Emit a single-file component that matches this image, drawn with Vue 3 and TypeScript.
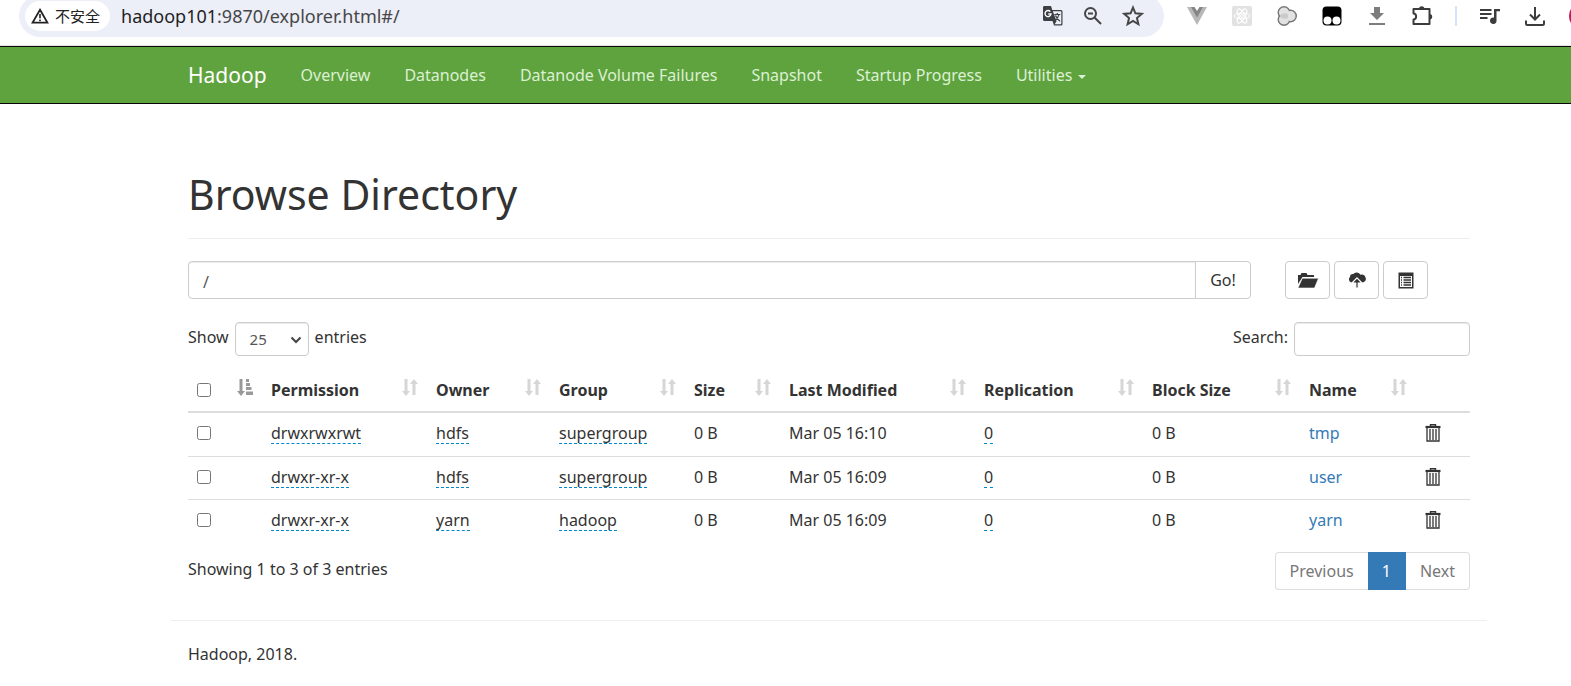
<script setup lang="ts">
import { ref } from 'vue'

interface Entry {
  permission: string
  owner: string
  group: string
  size: string
  modified: string
  replication: number
  blockSize: string
  name: string
}

const navLinks: string[] = ['Overview', 'Datanodes', 'Datanode Volume Failures', 'Snapshot', 'Startup Progress']
const columns: string[] = ['Permission', 'Owner', 'Group', 'Size', 'Last Modified', 'Replication', 'Block Size', 'Name']

const entries: Entry[] = [
  { permission: 'drwxrwxrwt', owner: 'hdfs', group: 'supergroup', size: '0 B', modified: 'Mar 05 16:10', replication: 0, blockSize: '0 B', name: 'tmp' },
  { permission: 'drwxr-xr-x', owner: 'hdfs', group: 'supergroup', size: '0 B', modified: 'Mar 05 16:09', replication: 0, blockSize: '0 B', name: 'user' },
  { permission: 'drwxr-xr-x', owner: 'yarn', group: 'hadoop', size: '0 B', modified: 'Mar 05 16:09', replication: 0, blockSize: '0 B', name: 'yarn' },
]

const address = ref('hadoop101:9870/explorer.html#/')
const directory = ref('/')
const pageSize = ref('25')
const search = ref('')
const selected = ref<string[]>([])

function toggleAll(event: Event): void {
  selected.value = (event.target as HTMLInputElement).checked ? entries.map((e) => e.name) : []
}
</script>

<template>
  <header class="browser">
    <div class="omnibox">
      <button class="chip" type="button">
        <svg width="18" height="16" viewBox="0 0 18 16" aria-hidden="true">
          <path d="M9 1.8 16.4 14.6H1.6Z" fill="none" stroke="#222" stroke-width="1.8" />
          <path d="M9 6v4.2M9 11.4v1.8" stroke="#222" stroke-width="1.6" />
        </svg>
        <span>不安全</span>
      </button>
      <div class="address" role="textbox" aria-label="Address"><b>{{ address.split(':')[0] }}</b>:{{ address.split(':')[1] }}</div>
      <button class="tool" type="button" aria-label="Translate">
        <svg width="22" height="22" viewBox="0 0 22 22">
          <path d="M2 1h7l1.300 4H19a1.500 1.500 0 0 1 1.500 1.500V19a1.500 1.500 0 0 1-1.500 1.500h-7L10.500 16H2.500A1.500 1.500 0 0 1 1 14.500V2.500A1.500 1.500 0 0 1 2 1Z" fill="#3c4043" />
          <path d="M10.800 6.200H18.600a.7.7 0 0 1 .7.7V18.600a.7.7 0 0 1-.7.7H12.600l2-3Z" fill="#eceef8" />
          <path d="M8.300 6.600A3 3 0 1 0 9 9H6.300" fill="none" stroke="#fff" stroke-width="1.400" />
          <path d="M12.300 9.500h6M15.300 8v1.500M17 9.500c-.6 3-2.500 5-4.300 6.200M13.500 10.500c1 2.500 2.600 4.500 4.500 5.800" fill="none" stroke="#3c4043" stroke-width="1.200" />
        </svg>
      </button>
      <button class="tool" type="button" aria-label="Zoom out">
        <svg width="20" height="20" viewBox="0 0 20 20" fill="none" stroke="#444746" stroke-width="2">
          <circle cx="7.500" cy="7.500" r="5.500" /><path d="m11.500 11.500 6.500 6.500M5 7.500h5" />
        </svg>
      </button>
      <button class="tool" type="button" aria-label="Bookmark">
        <svg width="22" height="22" viewBox="0 0 20 20">
          <path d="m10 2.300 2.200 5.300 5.700.5-4.300 3.800 1.300 5.600L10 14.500l-4.900 3 1.300-5.600-4.300-3.800 5.700-.5Z" fill="none" stroke="#444746" stroke-width="1.800" />
        </svg>
      </button>
    </div>
    <div class="extensions">
      <button class="tool" type="button" aria-label="Vue devtools">
        <svg width="20" height="18" viewBox="0 0 20 18"><path d="M0 0h20L10 18Z" fill="#b8b8b8" /><path d="M4 0h12l-6 10.500Z" fill="#858585" /><path d="M7.500 0h5L10 4Z" fill="#fff" /></svg>
      </button>
      <button class="tool" type="button" aria-label="React devtools">
        <svg width="22" height="22" viewBox="0 0 22 22" fill="none" stroke="#fff">
          <rect x="1" y="1" width="20" height="20" rx="2" fill="#e2e2e2" stroke="none" />
          <circle cx="11" cy="11" r="1.500" /><ellipse cx="11" cy="11" rx="8" ry="3" />
          <ellipse cx="11" cy="11" rx="8" ry="3" transform="rotate(60 11 11)" />
          <ellipse cx="11" cy="11" rx="8" ry="3" transform="rotate(120 11 11)" />
        </svg>
      </button>
      <button class="tool" type="button" aria-label="Colour extension">
        <svg width="22" height="22" viewBox="0 0 22 22">
          <g fill="#e2e2e2" stroke="#777" stroke-width="2"><circle cx="8" cy="7.500" r="5.500" /><circle cx="8" cy="14.500" r="5.500" /><circle cx="14.500" cy="11" r="5.500" /></g>
          <g fill="#e2e2e2"><circle cx="8" cy="7.500" r="5" /><circle cx="8" cy="14.500" r="5" /><circle cx="14.500" cy="11" r="5" /></g>
          <path d="M4 10c3-2 6-2 7-1.500 1.500 1.500 1.500 3.500 0 5-2 .5-5 0-7-1.500Z" fill="#cacaca" />
        </svg>
      </button>
      <button class="tool" type="button" aria-label="Script manager">
        <svg width="20" height="20" viewBox="0 0 20 20"><rect x=".5" y=".5" width="19" height="19" rx="4" /><circle cx="5.500" cy="14.500" r="4" fill="#fff" /><circle cx="14.500" cy="14.500" r="4" fill="#fff" /></svg>
      </button>
      <button class="tool" type="button" aria-label="Download helper">
        <svg width="16" height="20" viewBox="0 0 16 20" fill="#7d7d7d"><path d="M5 1h6v6h4l-7 7-7-7h4ZM0 17h16v2H0Z" /></svg>
      </button>
      <button class="tool" type="button" aria-label="Extensions">
        <svg width="22" height="22" viewBox="0 0 22 22">
          <path d="M2.500 4h16v15h-16v-4.500c3.500-.3 3.500-5.700 0-6Z" fill="none" stroke="#3c3c3c" stroke-width="2" stroke-linejoin="round" />
          <path d="M8 4a2.700 2.700 0 0 1 5.400 0ZM18.500 9a2.700 2.700 0 0 1 0 5.400Z" fill="#3c3c3c" />
        </svg>
      </button>
      <span class="divider"></span>
      <button class="tool" type="button" aria-label="Media controls">
        <svg width="20" height="18" viewBox="0 0 20 18" fill="#3c3c3c"><path d="M0 2h11.500v2H0ZM0 6h11.500v2H0ZM0 10h7.500v2H0ZM14 2h6v2.200h-3.500V13a3.300 3.300 0 1 1-2.500-2.500Z" /></svg>
      </button>
      <button class="tool" type="button" aria-label="Downloads">
        <svg width="20" height="20" viewBox="0 0 20 20" fill="none" stroke="#3c3c3c" stroke-width="2"><path d="M10 1v12M5 8.500l5 5 5-5M1 14.500V17.500a1.500 1.500 0 0 0 1.500 1.500h15a1.500 1.500 0 0 0 1.500-1.500V14.500" /></svg>
      </button>
      <span class="profile"></span>
    </div>
  </header>

  <nav class="navbar">
    <a class="brand" href="#">Hadoop</a>
    <a v-for="link in navLinks" :key="link" href="#">{{ link }}</a>
    <a href="#">Utilities<span class="caret"></span></a>
  </nav>

  <main class="content">
    <h1>Browse Directory</h1>

    <form class="path-row" @submit.prevent>
      <div class="input-group">
        <input v-model="directory" class="field" type="text" aria-label="Directory" />
        <button class="btn go" type="submit">Go!</button>
      </div>
      <div class="actions">
        <button class="btn" type="button" aria-label="Create directory">
          <svg width="22" height="17" viewBox="0 0 22 17" fill="#333"><path d="M1 12V3h2.500l1-2h5l1 2H17v2H5.500Z" /><path d="M5.300 6.200H21.500L17.500 16H1Z" stroke="#fff" stroke-width=".6" /></svg>
        </button>
        <button class="btn" type="button" aria-label="Upload files">
          <svg width="18" height="18" viewBox="0 0 18 18" fill="#333"><path d="M3.500 11.500A3.200 3.200 0 0 1 2 6a3 3 0 0 1 3.200-3A4.500 4.500 0 0 1 12.500 3.800 4 4 0 0 1 15 11.500h-3L9 8.500l-3 3Z" /><path d="M9 6.800l5 5.200H10.200v5H7.800v-5H4Z" stroke="#fff" stroke-width="1.200" /></svg>
        </button>
        <button class="btn" type="button" aria-label="Cut and paste">
          <svg width="16" height="17" viewBox="0 0 16 17"><path d="M.5.5h15v16H.5Z" fill="#333" /><path d="M2 4h12v11H2Z" fill="#fff" /><path d="M3 5.500h1M3 8h1M3 10.500h1M3 13h1M5.500 5.500H13M5.500 8H13M5.500 10.500H13M5.500 13H13" stroke="#333" stroke-width="1.400" /></svg>
        </button>
      </div>
    </form>

    <div class="table-controls">
      <label>Show
        <span class="select-wrap">
          <select v-model="pageSize" class="field"><option>25</option><option>50</option><option>100</option></select>
          <svg class="chevron" width="12" height="8" viewBox="0 0 12 8"><path d="m1.500 1.500 4.500 4.500 4.500-4.500" fill="none" stroke="#444" stroke-width="2" /></svg>
        </span>
        entries</label>
      <label>Search: <input v-model="search" class="field search" type="search" /></label>
    </div>

    <table>
      <colgroup>
        <col class="c-check" /><col class="c-permission" /><col class="c-owner" /><col class="c-group" /><col class="c-size" />
        <col class="c-modified" /><col class="c-replication" /><col class="c-block" /><col class="c-name" /><col class="c-trash" />
      </colgroup>
      <thead>
        <tr>
          <th>
            <div class="head">
              <input type="checkbox" aria-label="Select all" @change="toggleAll" />
              <svg class="sort active" width="16" height="17" viewBox="0 0 16 17"><path d="M2.500 0h3v12H8l-4 5-4-5h2.500ZM9 0h3v3H9ZM9 4h4v3H9ZM9 8h5.500v3H9ZM9 12.500h7V16H9Z" /></svg>
            </div>
          </th>
          <th v-for="column in columns" :key="column">
            <div class="head">
              <span>{{ column }}</span>
              <svg class="sort" width="16" height="17" viewBox="0 0 16 17"><path d="M2.500 0h3v12H8l-4 5-4-5h2.500ZM10.500 16V5H8l4-5 4 5h-2.500v11Z" /></svg>
            </div>
          </th>
          <th></th>
        </tr>
      </thead>
      <tbody>
        <tr v-for="entry in entries" :key="entry.name">
          <td><input v-model="selected" type="checkbox" :value="entry.name" :aria-label="`Select ${entry.name}`" /></td>
          <td><span class="editable">{{ entry.permission }}</span></td>
          <td><span class="editable">{{ entry.owner }}</span></td>
          <td><span class="editable">{{ entry.group }}</span></td>
          <td>{{ entry.size }}</td>
          <td>{{ entry.modified }}</td>
          <td><span class="editable">{{ entry.replication }}</span></td>
          <td>{{ entry.blockSize }}</td>
          <td><a href="#">{{ entry.name }}</a></td>
          <td>
            <button class="trash" type="button" :aria-label="`Delete ${entry.name}`">
              <svg width="16" height="18" viewBox="0 0 16 18" fill="none" stroke="#333"><path d="M5.500 2V.7h5V2" stroke-width="1.400" /><path d="M.5 3h15" stroke-width="2.200" /><path d="M2 4v13h12V4M5 5v11M8 5v11M11 5v11" stroke-width="1.300" /></svg>
            </button>
          </td>
        </tr>
      </tbody>
    </table>

    <div class="table-footer">
      <span>Showing 1 to 3 of 3 entries</span>
      <div class="pagination">
        <button type="button">Previous</button>
        <button type="button" class="current" aria-current="page">1</button>
        <button type="button">Next</button>
      </div>
    </div>
  </main>

  <footer>Hadoop, 2018.</footer>
</template>

<style>
body {
  margin: 0;
  background: #fff;
  overflow-x: hidden;
}
</style>

<style scoped>
.browser,
.navbar,
.content,
footer {
  box-sizing: border-box;
  font-family: "Noto Sans", "Open Sans", "Noto Sans CJK SC", sans-serif;
  font-size: 16px;
  line-height: 24px;
  color: #333;
}
button,
input,
select {
  font: inherit;
  color: inherit;
  box-sizing: border-box;
}
svg {
  display: block;
  flex: none;
}
a {
  color: #337ab7;
  text-decoration: none;
}

.browser {
  display: flex;
  height: 46px;
  padding-left: 19px;
  border-bottom: 1px solid #e3e3e3;
  overflow: hidden;
}
.omnibox {
  flex: 1;
  display: flex;
  align-items: center;
  box-sizing: border-box;
  height: 42px;
  margin-top: -5px;
  padding: 0 20px 0 6px;
  border-radius: 21px;
  background: #eceef8;
}
.chip {
  display: flex;
  align-items: center;
  gap: 6px;
  height: 30px;
  padding: 0 10px 0 6px;
  border: 0;
  border-radius: 15px;
  background: #fff;
  font-family: "Noto Sans CJK SC", sans-serif;
  font-size: 15px;
  color: #222;
}
.address {
  flex: 1;
  padding-left: 11px;
  font-size: 18px;
  color: #474747;
}
.address b {
  font-weight: 400;
  color: #1f1f1f;
}
.tool {
  display: flex;
  align-items: center;
  justify-content: center;
  width: 22px;
  height: 22px;
  padding: 0;
  border: 0;
  background: none;
}
.omnibox .tool {
  margin-left: 18px;
}
.extensions {
  display: flex;
  align-items: center;
  gap: 23px;
  height: 32px;
  padding-left: 22px;
}
.divider {
  width: 2px;
  height: 20px;
  margin: 0 -1px;
  background: #d3e3fd;
}
.profile {
  width: 28px;
  height: 28px;
  margin-right: -26px;
  border-radius: 50%;
  background: #c2185b;
}

.navbar {
  display: flex;
  align-items: center;
  gap: 34px;
  height: 58px;
  padding: 0 84px 0 188px;
  border: solid #080808;
  border-width: 1px 0;
  background: #5fa33e;
  white-space: nowrap;
}
.navbar a {
  color: #dcf0d3;
}
.navbar .brand {
  font-size: 21px;
  color: #fff;
}
.caret {
  display: inline-block;
  margin-left: 6px;
  border: 4px solid transparent;
  border-top-color: currentColor;
  border-bottom: 0;
  vertical-align: middle;
}

.content {
  padding: 60px 101px 0 188px;
}
h1 {
  margin: 0 0 22px;
  padding-bottom: 14px;
  border-bottom: 1px solid #eee;
  font-size: 41px;
  line-height: 60px;
  font-weight: 400;
}
.field {
  border: 1px solid #ccc;
  border-radius: 4px;
  background: #fff;
  box-shadow: inset 0 1px 1px rgba(0, 0, 0, 0.08);
  color: #555;
  outline: 0;
}
.path-row {
  display: flex;
  gap: 34px;
  padding-right: 42px;
}
.input-group {
  flex: 1;
  display: flex;
}
.input-group .field {
  flex: 1;
  min-width: 0;
  height: 38px;
  padding: 4px 14px 0;
  border-radius: 4px 0 0 4px;
}
.btn {
  display: flex;
  align-items: center;
  justify-content: center;
  width: 45px;
  height: 38px;
  padding: 0;
  border: 1px solid #ccc;
  border-radius: 4px;
  background: #fff;
}
.go {
  width: 56px;
  margin-left: -1px;
  border-radius: 0 4px 4px 0;
}
.actions {
  display: flex;
  gap: 4px;
}
.table-controls {
  display: flex;
  justify-content: space-between;
  margin-top: 23px;
}
.table-controls label {
  display: flex;
  gap: 6px;
  line-height: 30px;
}
.table-controls .field {
  height: 34px;
}
.select-wrap {
  position: relative;
}
select.field {
  display: block;
  width: 74px;
  padding: 0 14px;
  appearance: none;
  font-size: 15px;
}
.chevron {
  position: absolute;
  right: 7px;
  top: 14px;
  pointer-events: none;
}
.search {
  width: 176px;
  padding: 0 12px;
}

table {
  width: 100%;
  margin-top: 8px;
  table-layout: fixed;
  border-collapse: separate;
  border-spacing: 0;
}
.c-check { width: 74px; }
.c-permission { width: 165px; }
.c-owner { width: 123px; }
.c-group { width: 135px; }
.c-size { width: 95px; }
.c-modified { width: 195px; }
.c-replication { width: 168px; }
.c-block { width: 157px; }
.c-name { width: 116px; }
.c-trash { width: 54px; }
th,
td {
  box-sizing: border-box;
  padding: 0 9px;
  text-align: left;
  white-space: nowrap;
}
th {
  height: 49px;
  padding-top: 4px;
  border-bottom: 2px solid #ddd;
  font-weight: 700;
}
td {
  height: 43px;
  padding-bottom: 3px;
}
tbody tr + tr td {
  border-top: 1px solid #ddd;
}
.head {
  display: flex;
  align-items: center;
  justify-content: space-between;
}
.sort {
  margin-bottom: 5px;
  fill: #d6d6d6;
}
.sort.active {
  fill: #999;
}
input[type="checkbox"] {
  display: block;
  width: 14px;
  height: 14px;
  margin: 0;
}
.editable {
  display: inline-block;
  line-height: 20px;
  border-bottom: 1px dashed #0088cc;
  color: #333;
}
.trash {
  display: block;
  padding: 0;
  border: 0;
  background: none;
}
.table-footer {
  display: flex;
  justify-content: space-between;
  margin-top: 10px;
  line-height: 34px;
}
.pagination {
  display: flex;
}
.pagination button {
  height: 38px;
  padding: 0 14px;
  border: 1px solid #ddd;
  background: #fff;
  color: #777;
}
.pagination button + button {
  border-left: 0;
}
.pagination button:first-child {
  border-radius: 4px 0 0 4px;
  border-right: 0;
}
.pagination button:last-child {
  border-radius: 0 4px 4px 0;
}
.pagination .current {
  border-color: #337ab7;
  background: #337ab7;
  color: #fff;
}
footer {
  margin: 30px 84px 0 171px;
  padding: 21px 17px 0;
  border-top: 1px solid #eee;
}
</style>
